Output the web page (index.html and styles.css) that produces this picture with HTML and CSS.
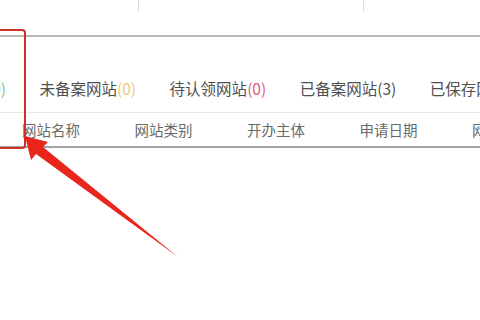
FILE: index.html
```html
<!DOCTYPE html>
<html lang="zh">
<head>
<meta charset="utf-8">
<link rel="stylesheet" href="styles.css">
</head>
<body>
<div class="page">
  <div class="topbar">
    <div class="cell c1"></div>
    <div class="cell c2"></div>
    <div class="cell c3"></div>
  </div>
  <div class="tabs">
    <div class="tab-cut"><span class="tab">已保存网站<span class="green">(0)</span></span></div>
    <span class="tab">未备案网站<span class="orange">(0)</span></span>
    <span class="tab">待认领网站<span class="pink">(0)</span></span>
    <span class="tab">已备案网站(3)</span>
    <span class="tab">已保存网站(0)</span>
  </div>
  <div class="thead">
    <span>网站名称</span>
    <span>网站类别</span>
    <span>开办主体</span>
    <span>申请日期</span>
    <span>网站状态</span>
  </div>
  <div class="mark-box"></div>
  <svg class="arrow" width="480" height="320" viewBox="0 0 480 320">
    <polygon points="25,136 48,142 43,147 178,257 36,154 31,160" fill="#e8261c"/>
  </svg>
</div>
</body>
</html>
```
FILE: styles.css
```css
html, body {
  margin: 0;
  padding: 0;
  background: #fff;
}
.page {
  position: relative;
  width: 480px;
  height: 320px;
  overflow: hidden;
  font-family: "Noto Sans CJK SC", "Noto Sans", sans-serif;
}
.topbar {
  display: flex;
  height: 12px;
  padding-bottom: 23px;
  border-bottom: 2px solid #b9b9b9;
}
.cell {
  height: 12px;
}
.c1 { width: 138px; }
.c2 { width: 224px; border-left: 1px solid #dcdcdc; }
.c3 { flex: 1; border-left: 1px solid #dcdcdc; }
.tabs {
  box-sizing: border-box;
  display: flex;
  align-items: center;
  gap: 33.5px;
  height: 76px;
  padding-top: 27px;
  border-bottom: 1px solid #e8e8e8;
  font-size: 15.5px;
  color: #505050;
  white-space: nowrap;
}
.tab-cut {
  width: 6px;
  overflow: hidden;
  display: flex;
  justify-content: flex-end;
  flex-shrink: 0;
}
.tab { flex-shrink: 0; }
.green { color: #86c276; }
.orange { color: #f2c678; }
.pink { color: #e05a82; }
.thead {
  display: grid;
  grid-template-columns: repeat(5, 112.5px);
  align-items: center;
  height: 33px;
  padding-left: 22px;
  border-bottom: 2px solid #a4a4a4;
  font-size: 14.5px;
  color: #6a6a6a;
  white-space: nowrap;
}
.mark-box {
  position: absolute;
  left: -10px;
  top: 29px;
  width: 32px;
  height: 116px;
  border: 2px solid #cc3129;
  border-radius: 4px;
}
.arrow {
  position: absolute;
  left: 0;
  top: 0;
}
```
